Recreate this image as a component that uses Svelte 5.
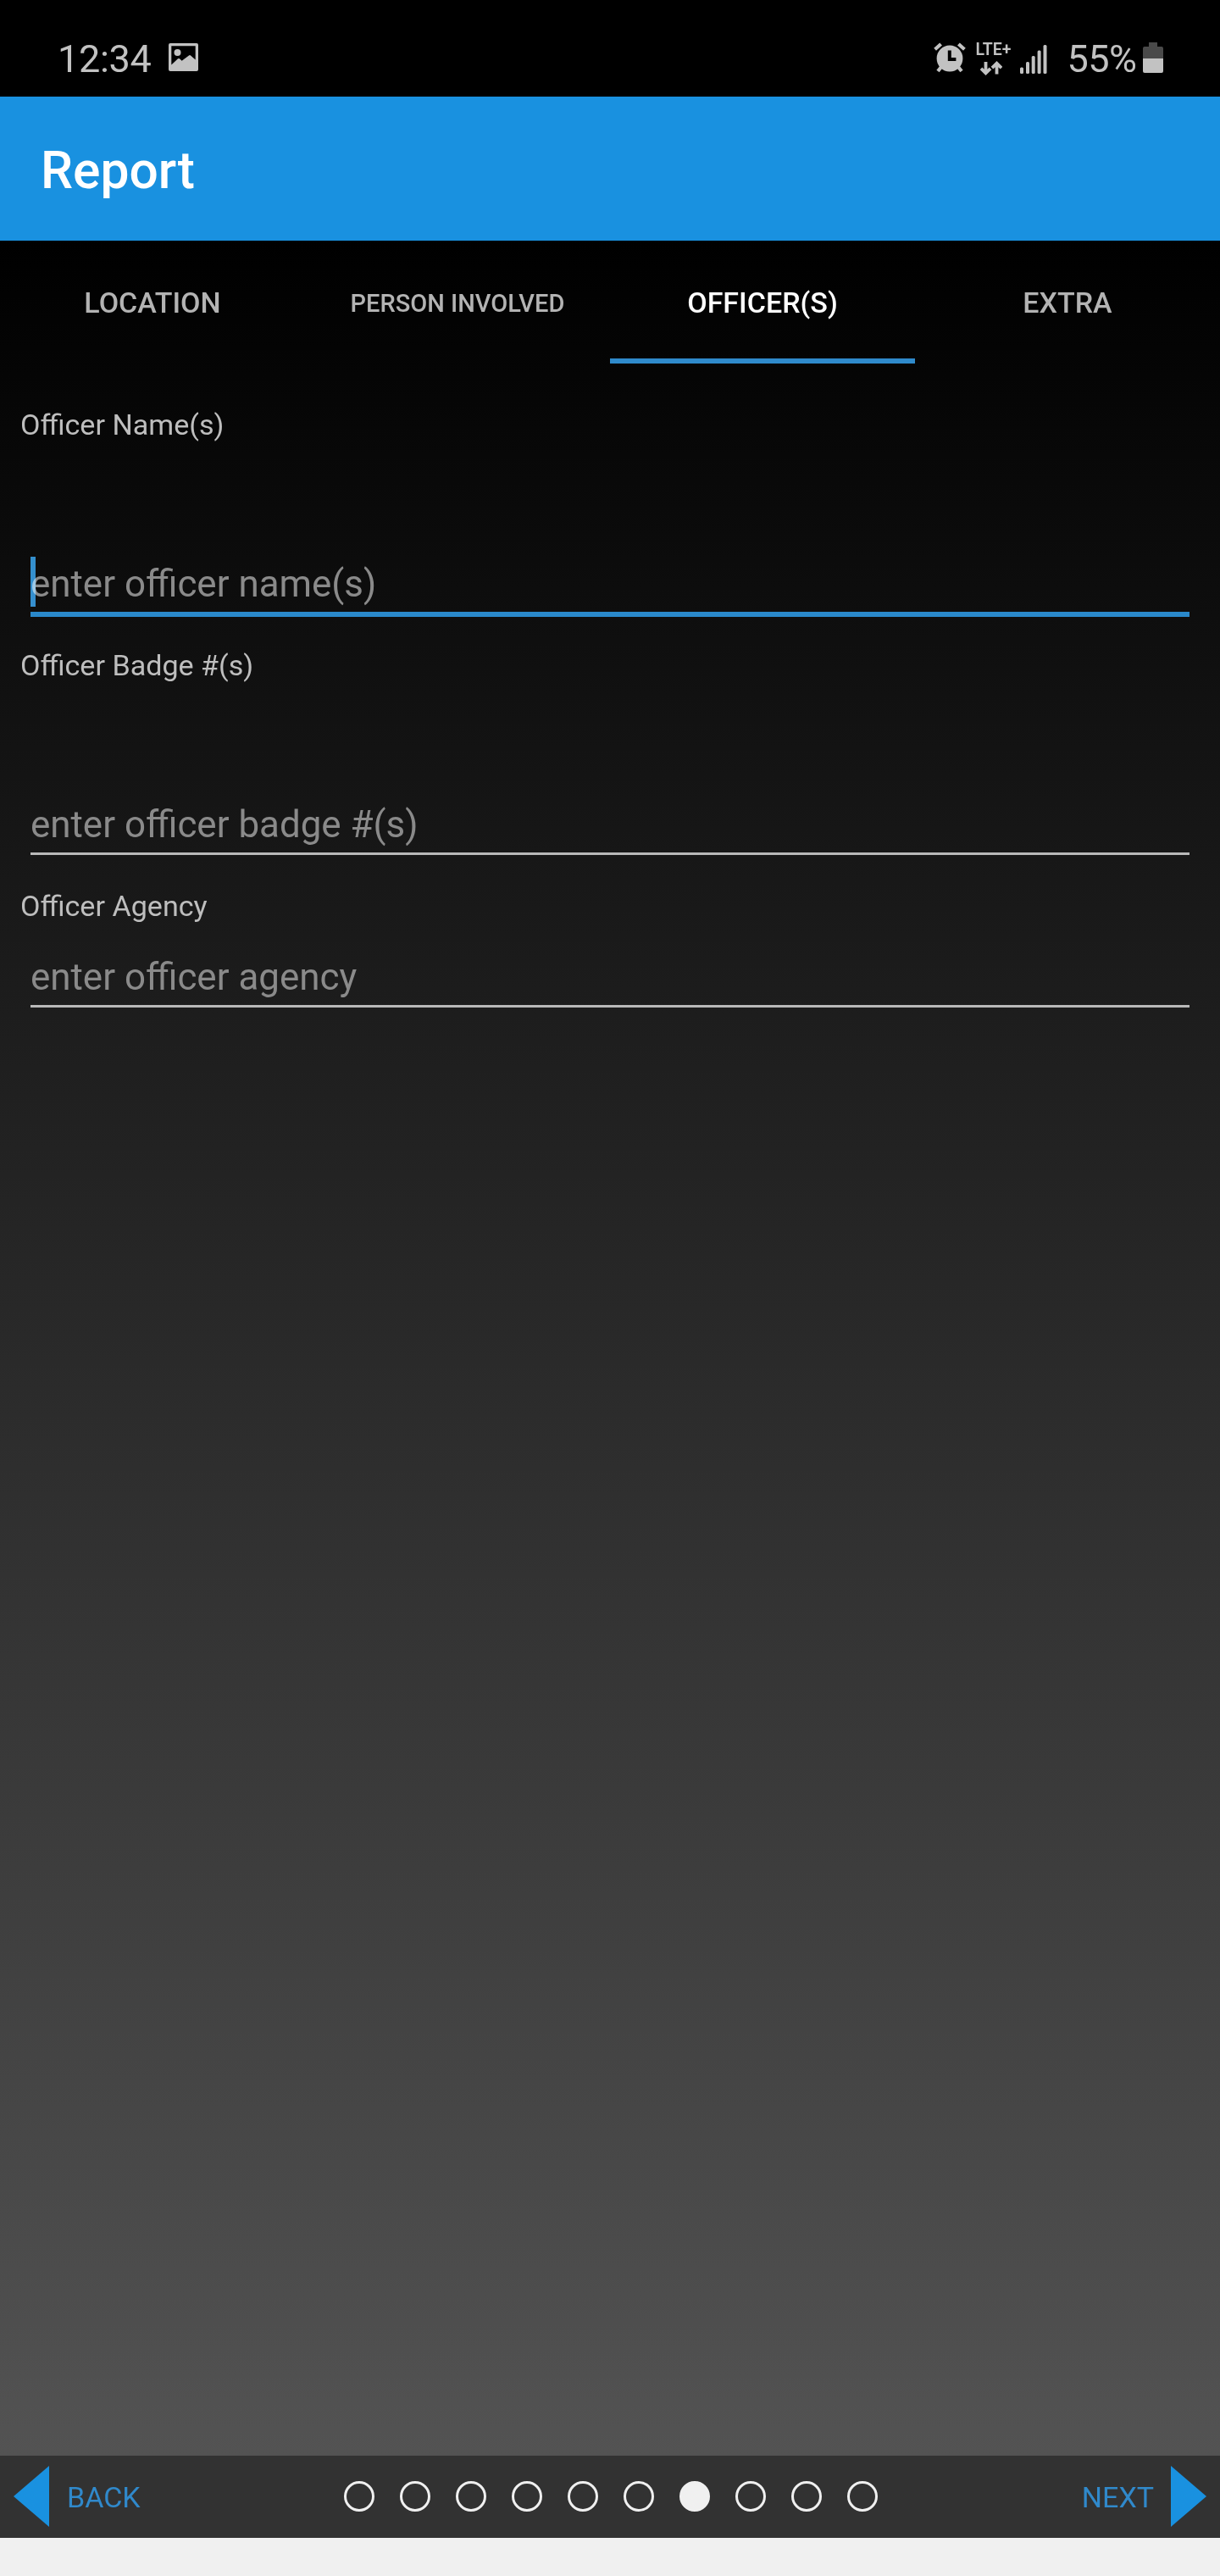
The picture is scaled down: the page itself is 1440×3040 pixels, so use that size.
<script>
  const tabs = [
    { label: 'Location' },
    { label: 'Person Involved', compact: true },
    { label: 'Officer(s)', active: true },
    { label: 'Extra' }
  ];
  const fields = [
    { id: 'name', label: 'Officer Name(s)', hint: 'enter officer name(s)', focused: true, tall: true },
    { id: 'badge', label: 'Officer Badge #(s)', hint: 'enter officer badge #(s)', tall: true },
    { id: 'agency', label: 'Officer Agency', hint: 'enter officer agency' }
  ];
  const steps = Array.from({ length: 10 }, (_, i) => i);
  const currentStep = 6;
</script>

<div class="screen">
  <div class="status">
    <span class="clock">12:34</span>
    <svg class="picture" width="35" height="33" viewBox="0 0 35 33">
      <path fill="#c2c2c2" fill-rule="evenodd" d="M2 0H33Q35 0 35 2V31Q35 33 33 33H2Q0 33 0 31V2Q0 0 2 0ZM3.3 3.3V25.5L11 18.3Q12 17.5 13 18.3L15.6 20.8L24 14.4Q25 13.6 26 14.4L31.7 19.6V3.3Z" />
      <circle cx="10.5" cy="11" r="4" fill="#c2c2c2" />
    </svg>
    <div class="signals">
      <svg class="alarm" width="38" height="36" viewBox="0 0 38 36">
        <g stroke="#c2c2c2" stroke-width="4.2" fill="none">
          <path d="M1.6 8.2L8.6 2M36.4 8.2L29.4 2" />
          <path d="M9 29L5 34M29 29L33 34" />
        </g>
        <circle cx="19" cy="19" r="15.4" fill="#c2c2c2" />
        <path d="M18.8 9.5V20H26.4" stroke="#000" stroke-width="4" fill="none" />
      </svg>
      <div class="network">
        <span>LTE+</span>
        <svg width="26" height="18" viewBox="0 0 26 18">
          <g stroke="#c2c2c2" stroke-width="3.8" fill="none">
            <path d="M6.5 1V14M1 8.8L6.5 14.3L12 8.8" />
            <path d="M19.5 15.5V3M14 8.2L19.5 2.7L25 8.2" />
          </g>
        </svg>
      </div>
      <svg class="bars" width="32" height="34" viewBox="0 0 32 34">
        <g fill="#c2c2c2">
          <rect x="0" y="26.5" width="4" height="7.5" rx="1.5" />
          <rect x="7" y="20" width="4" height="14" rx="1.5" />
          <rect x="13.7" y="13" width="4" height="21" rx="1.5" />
          <rect x="20.6" y="6.5" width="4" height="27.5" rx="1.5" />
          <rect x="27.5" y="0" width="4" height="34" rx="1.5" />
        </g>
      </svg>
      <span class="percent">55%</span>
      <svg class="battery" width="24" height="36" viewBox="0 0 24 36">
        <path d="M7 0H17V5H22Q24 5 24 7V19H0V7Q0 5 2 5H7Z" fill="#4a4a4a" />
        <path d="M0 19H24V34Q24 36 22 36H2Q0 36 0 34Z" fill="#c2c2c2" />
      </svg>
    </div>
  </div>

  <header><h1>Report</h1></header>

  <main>
    <nav>
      {#each tabs as tab}
        <button class="tab" class:active={tab.active} class:compact={tab.compact}>{tab.label}</button>
      {/each}
    </nav>
    <form>
      {#each fields as field}
        <div class="field" class:tall={field.tall} class:focused={field.focused}>
          <label for={field.id}>{field.label}</label>
          <input id={field.id} placeholder={field.hint} />
          {#if field.focused}<i class="caret"></i>{/if}
        </div>
      {/each}
    </form>
  </main>

  <footer>
    <button class="step">
      <svg width="42" height="72" viewBox="0 0 42 72"><path d="M0 36L42 0V72Z" fill="#1991e0" /></svg>
      <span>BACK</span>
    </button>
    <div class="dots">
      {#each steps as step}
        <i class="dot" class:current={step === currentStep}></i>
      {/each}
    </div>
    <button class="step">
      <span>NEXT</span>
      <svg width="42" height="72" viewBox="0 0 42 72"><path d="M42 36L0 0V72Z" fill="#1991e0" /></svg>
    </button>
  </footer>
  <div class="system"></div>
</div>

<style>
  :global(body) { background: #000; }
  .screen {
    width: 1440px;
    height: 3040px;
    display: flex;
    flex-direction: column;
    overflow: hidden;
    background: #000;
    font-family: Roboto, "Liberation Sans", sans-serif;
  }
  svg { display: block; flex: none; }
  button {
    border: 0;
    padding: 0;
    background: none;
    font-family: inherit;
  }

  .status {
    height: 114px;
    box-sizing: border-box;
    padding: 25px 67px 0 68px;
    display: flex;
    align-items: center;
    color: #c2c2c2;
    font-size: 45px;
    line-height: 53px;
  }
  .clock { width: 130.5px; letter-spacing: -0.3px; }
  .picture { margin-top: -4px; }
  .signals {
    margin-left: auto;
    display: flex;
    align-items: center;
  }
  .alarm { margin-right: 11.5px; margin-top: -3px; }
  .network {
    width: 52px;
    height: 42px;
    font-size: 19.5px;
    font-weight: 600;
    line-height: 20px;
  }
  .network span { display: block; }
  .network svg { margin: 3px 0 0 5px; }
  .bars { margin-right: 24px; }
  .percent { width: 89.5px; letter-spacing: -0.5px; }
  .battery { margin-top: -3px; }

  header {
    height: 170px;
    box-sizing: border-box;
    padding: 5px 0 0 48px;
    display: flex;
    align-items: center;
    background: #1991e0;
  }
  h1 {
    margin: 0;
    color: #fff;
    font-size: 60.5px;
    line-height: 71px;
    font-weight: 500;
  }

  main {
    flex: 1;
    background: linear-gradient(#000, #535353);
  }
  nav {
    height: 145px;
    display: grid;
    grid-template-columns: repeat(4, 1fr);
  }
  .tab {
    padding-top: 6px;
    border-bottom: 6px solid transparent;
    color: #b3b3b3;
    font-size: 34px;
    font-weight: 500;
    text-transform: uppercase;
  }
  .tab.compact { padding-top: 8px; font-size: 29px; }
  .tab.active { color: #fff; border-color: #2f8acb; }

  form { padding: 52px 36px 0 24px; }
  .field {
    position: relative;
    display: flex;
    flex-direction: column;
  }
  .field.tall { height: 284px; }
  label {
    color: #bebebe;
    font-size: 34.1px;
    line-height: 40px;
  }
  input {
    margin-left: 12px;
    height: 54px;
    padding: 37px 0 6px;
    border: 0;
    border-bottom: 3px solid #b9b9b9;
    border-radius: 0;
    outline: none;
    background: none;
    font-family: inherit;
    font-size: 43.9px;
  }
  .tall input { padding-top: 141px; }
  .focused input { border-bottom: 6px solid #2a89cb; }
  input::placeholder { color: #8a8a8a; opacity: 1; }
  .caret {
    position: absolute;
    left: 12px;
    top: 176px;
    width: 6px;
    height: 59px;
    background: #2a89cb;
    mix-blend-mode: screen;
  }

  footer {
    height: 97px;
    box-sizing: border-box;
    padding: 0 16px 1px;
    display: flex;
    align-items: center;
    justify-content: space-between;
    background: #323232;
  }
  .step {
    width: 240px;
    display: flex;
    align-items: center;
    gap: 21px;
    color: #3089cb;
    font-size: 34px;
  }
  .step span { padding-top: 1px; }
  .step:last-child { justify-content: flex-end; gap: 20px; }
  .dots { display: flex; gap: 30px; padding: 0 0 1px 2px; }
  .dot {
    width: 36px;
    height: 36px;
    box-sizing: border-box;
    border: 3px solid #f0f0f0;
    border-radius: 50%;
  }
  .dot.current { background: #f0f0f0; }
  .system { height: 45px; background: #f0f0f0; }
</style>
